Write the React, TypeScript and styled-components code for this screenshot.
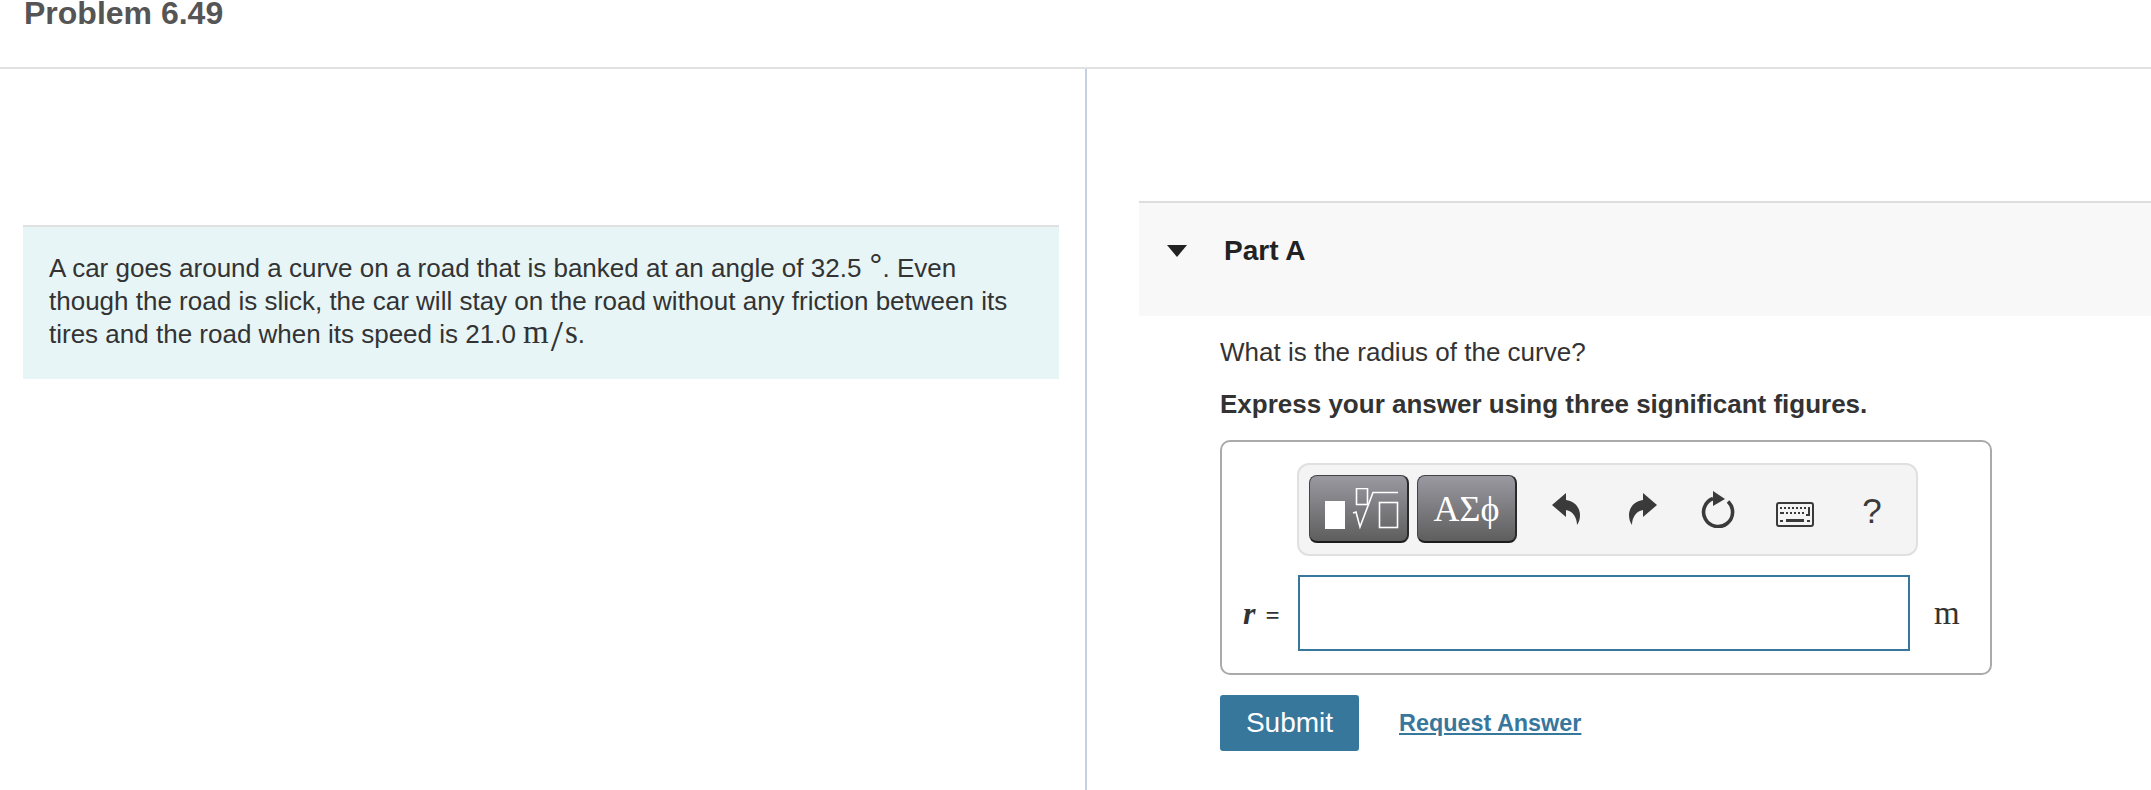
import { FunctionComponent } from 'react';
import styled, { createGlobalStyle } from 'styled-components';

const GlobalStyle = createGlobalStyle`
  *, *::before, *::after {
    box-sizing: border-box;
  }
  html, body {
    margin: 0;
    padding: 0;
    background: #fff;
    overflow: hidden;
  }
  body {
    font-family: "Liberation Sans", Arial, sans-serif;
    color: #333;
  }
`;

const Page = styled.div`
  width: 2151px;
  height: 790px;
  overflow: hidden;
  display: flex;
  flex-direction: column;
`;

const Header = styled.header`
  height: 69px;
  flex: none;
  padding-left: 24px;
  border-bottom: 2px solid #e0e0e0;
`;

const Title = styled.h1`
  margin: 0;
  font-size: 32px;
  line-height: 26px;
  font-weight: 700;
  color: #555;
`;

const Columns = styled.div`
  flex: 1;
  display: grid;
  grid-template-columns: 1085px 2px 1fr;
`;

const LeftColumn = styled.section`
  padding: 156px 26px 0 23px;
`;

const Divider = styled.div`
  background: #c5d0e0;
`;

const Intro = styled.div`
  height: 154px;
  padding: 25px 26px 0;
  background: #e7f5f7;
  border-top: 2px solid #e0e0e0;
  font-size: 26px;
  line-height: 33px;
`;

const MathText = styled.span`
  font-family: "Liberation Serif", "DejaVu Serif", serif;
  font-size: 33px;
  line-height: 0;
`;

const Slash = styled.span`
  margin: 0 2px;
  font-size: 44px;
  line-height: 0;
  vertical-align: -8px;
`;

const Degree = styled.span`
  position: relative;
  top: 0;
  margin-left: 8px;
  font-size: 33px;
  line-height: 0;
`;

const RightColumn = styled.section`
  padding-top: 132px;
  padding-left: 52px;
`;

const PartHeader = styled.div`
  height: 115px;
  display: flex;
  align-items: center;
  gap: 37px;
  padding: 0 0 18px 28px;
  background: #f8f8f8;
  border-top: 2px solid #ddd;
`;

const Caret = styled.span`
  width: 0;
  height: 0;
  border-left: 10px solid transparent;
  border-right: 10px solid transparent;
  border-top: 12px solid #222;
`;

const PartTitle = styled.h2`
  margin: 0;
  font-size: 28px;
  font-weight: 700;
  color: #222;
`;

const PartBody = styled.div`
  padding: 20px 0 0 81px;
  width: 853px;
`;

const Question = styled.p`
  margin: 0;
  font-size: 26px;
  line-height: 33px;
`;

const Instruction = styled(Question)`
  margin-top: 19px;
  font-weight: 700;
`;

const AnswerCard = styled.div`
  height: 235px;
  margin-top: 19px;
  padding: 21px 0 0;
  border: 2px solid #aaa;
  border-radius: 10px;
  display: flex;
  flex-direction: column;
  align-items: flex-start;
`;

const Toolbar = styled.div`
  width: 621px;
  height: 93px;
  margin-left: 75px;
  padding: 10px;
  display: flex;
  align-items: flex-start;
  background: #f4f4f4;
  border: 2px solid #e0e0e0;
  border-radius: 12px;
`;

const TemplateButton = styled.button<{ $gap?: number }>`
  flex: none;
  width: 100px;
  height: 68px;
  margin-right: ${(p) => p.$gap ?? 0}px;
  padding: 0;
  display: flex;
  align-items: center;
  justify-content: center;
  color: #fff;
  background: linear-gradient(#9a99a1, #5e5e5e);
  border: 1px solid #444;
  border-bottom: 2px solid #1c1c1c;
  border-right: 2px solid #2a2a2a;
  border-radius: 8px;
  font-family: "Liberation Serif", serif;
  font-size: 36px;
`;

const RootSvg = styled.svg`
  margin-left: 7px;
`;

const ToolSlot = styled.span<{ $width: number; $left: number; $top: number }>`
  flex: none;
  width: ${(p) => p.$width}px;
  margin-left: ${(p) => p.$left}px;
  margin-top: ${(p) => p.$top}px;
  display: flex;
  justify-content: center;
  color: #3a3a3a;
`;

const HelpMark = styled.span`
  font-size: 35px;
  line-height: 33px;
  color: #3a3a3a;
`;

const AnswerRow = styled.div`
  margin-top: 19px;
  display: flex;
  align-items: center;
`;

const VarLabel = styled.span`
  width: 76px;
  padding-left: 21px;
  font-family: "Liberation Serif", serif;
  font-size: 25px;
  font-weight: 700;
  white-space: nowrap;
`;

const VarName = styled.i`
  margin-right: 10px;
  font-size: 32px;
  font-weight: 700;
`;

const AnswerInput = styled.input`
  width: 612px;
  height: 76px;
  padding: 0 10px;
  background: #fff;
  border: 2px solid #37779b;
  outline: none;
`;

const Unit = styled.span`
  margin-left: 24px;
  font-family: "Liberation Serif", serif;
  font-size: 33px;
`;

const Actions = styled.div`
  margin-top: 20px;
  display: flex;
  align-items: center;
  gap: 40px;
`;

const SubmitButton = styled.button`
  width: 139px;
  height: 56px;
  padding: 0;
  color: #fff;
  background: #37779b;
  border: none;
  border-radius: 3px;
  font-family: "Liberation Sans", Arial, sans-serif;
  font-size: 28px;
`;

const AnswerLink = styled.a`
  color: #37779b;
  font-size: 23.4px;
  font-weight: 700;
  text-decoration: underline;
`;

const RootIcon: FunctionComponent = () => (
  <RootSvg width="74" height="42" viewBox="0 0 74 42" fill="none" stroke="#fff">
    <rect x="0" y="13" width="20" height="28" fill="#fff" stroke="none" />
    <rect x="31.5" y="0.5" width="11" height="16" strokeWidth="1.6" />
    <path d="M28 25 L31 24 L35 39 L48 4.5 H73" strokeWidth="1.6" />
    <rect x="54.5" y="14.5" width="18" height="25" strokeWidth="1.6" />
  </RootSvg>
);

const UndoIcon: FunctionComponent<{ flip?: boolean }> = ({ flip }) => (
  <svg
    width="28"
    height="32"
    viewBox="0 0 28 32"
    fill="currentColor"
    style={flip ? { transform: 'scaleX(-1)' } : undefined}
  >
    <path d="M0 12 L14 0 V7 C23 8 28 15 28 22 C28 26 27 29 25 32 C25 25 21 18 14 17 V24 Z" />
  </svg>
);

const ResetIcon: FunctionComponent = () => (
  <svg width="34" height="37" viewBox="0 0 34 37" fill="none" stroke="currentColor">
    <path d="M12 7.5 A14.5 14.5 0 1 0 27 10.5" strokeWidth="3.6" />
    <path d="M12 0 L24 8 L12 15 Z" fill="currentColor" stroke="none" />
  </svg>
);

const KeyboardIcon: FunctionComponent = () => (
  <svg width="38" height="25" viewBox="0 0 38 25" fill="currentColor">
    <rect x="1" y="1" width="36" height="23" rx="2" fill="#f4f4f4" stroke="currentColor" strokeWidth="2" />
    <path
      d="M4 5h2v2H4zM8 5h2v2H8zM12 5h2v2h-2zM16 5h2v2h-2zM20 5h2v2h-2zM24 5h2v2h-2zM28 5h2v2h-2zM32 5h2v2h-2z
         M4 10h4v2H4zM10 10h2v2h-2zM14 10h2v2h-2zM18 10h2v2h-2zM22 10h2v2h-2zM26 10h2v2h-2zM32 5h2v9h-2zM30 12h4v2h-4z
         M4 18h3v2H4zM10 17h18v3H10zM31 18h3v2h-3z"
    />
  </svg>
);

const App: FunctionComponent = () => (
  <Page>
    <GlobalStyle />
    <Header>
      <Title>Problem 6.49</Title>
    </Header>
    <Columns>
      <LeftColumn>
        <Intro>
          A car goes around a curve on a road that is banked at an angle of 32.5
          <Degree>°</Degree>. Even though the road is slick, the car will stay on the road
          without any friction between its tires and the road when its speed is 21.0{' '}
          <MathText>
            m<Slash>/</Slash>s
          </MathText>
          .
        </Intro>
      </LeftColumn>
      <Divider />
      <RightColumn>
        <PartHeader>
          <Caret />
          <PartTitle>Part A</PartTitle>
        </PartHeader>
        <PartBody>
          <Question>What is the radius of the curve?</Question>
          <Instruction>Express your answer using three significant figures.</Instruction>
          <AnswerCard>
            <Toolbar>
              <TemplateButton $gap={8}>
                <RootIcon />
              </TemplateButton>
              <TemplateButton>ΑΣϕ</TemplateButton>
              <ToolSlot $width={28} $left={35} $top={18}>
                <UndoIcon />
              </ToolSlot>
              <ToolSlot $width={28} $left={49} $top={18}>
                <UndoIcon flip />
              </ToolSlot>
              <ToolSlot $width={34} $left={44} $top={16}>
                <ResetIcon />
              </ToolSlot>
              <ToolSlot $width={38} $left={41} $top={27}>
                <KeyboardIcon />
              </ToolSlot>
              <ToolSlot $width={18} $left={49} $top={19}>
                <HelpMark>?</HelpMark>
              </ToolSlot>
            </Toolbar>
            <AnswerRow>
              <VarLabel>
                <VarName>r</VarName>=
              </VarLabel>
              <AnswerInput type="text" />
              <Unit>m</Unit>
            </AnswerRow>
          </AnswerCard>
          <Actions>
            <SubmitButton>Submit</SubmitButton>
            <AnswerLink href="#">Request Answer</AnswerLink>
          </Actions>
        </PartBody>
      </RightColumn>
    </Columns>
  </Page>
);

export default App;
